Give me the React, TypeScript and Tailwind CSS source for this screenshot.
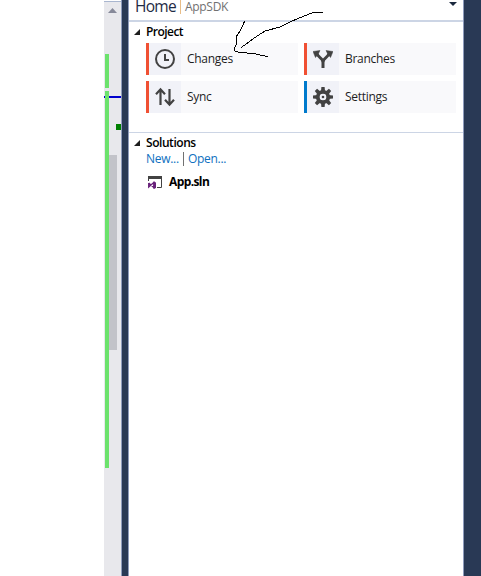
import type { ReactNode } from 'react';

function ClockIcon() {
  return (
    <svg width="20" height="20" viewBox="0 0 20 20" fill="none" stroke="#424242" strokeWidth="2">
      <circle cx="10" cy="10" r="9" />
      <path d="M10 5v6h4" />
    </svg>
  );
}

function SyncIcon() {
  return (
    <svg width="20" height="20" viewBox="0 0 20 20" fill="none" stroke="#424242" strokeWidth="2.2">
      <path d="M5.5 18V2M1 7.2L5.5 2.3L10 7.2M14.5 2v16M10 12.8l4.5 4.9l4.5-4.9" />
    </svg>
  );
}

function BranchIcon() {
  return (
    <svg width="20" height="20" viewBox="0 0 20 20" fill="none">
      <path d="M4 4.500C5 9 10 8.500 10 13.500C10 8.500 15 9 16 4.500M10 12v7" stroke="#424242" strokeWidth="3" />
      <path d="M0 2.500L7 1.500L5.500 4.500L2.500 8.500zM20 2.500L13 1.500L14.500 4.500L17.500 8.500z" fill="#424242" stroke="#424242" strokeWidth=".5" />
    </svg>
  );
}

function GearIcon() {
  const angles = [0, 45, 90, 135, 180, 225, 270, 315];
  return (
    <svg width="20" height="20" viewBox="0 0 20 20" fill="#424242">
      {angles.map((a) => (
        <path key={a} d="M8.400 0h3.200l.5 5H7.900z" transform={`rotate(${a} 10 10)`} />
      ))}
      <circle cx="10" cy="10" r="5.200" fill="none" stroke="#424242" strokeWidth="3.800" />
      <circle cx="10" cy="10" r="3.100" fill="#f1f2f8" />
      <circle cx="10" cy="10" r="1.300" />
    </svg>
  );
}

function SolutionIcon() {
  return (
    <svg width="15" height="13" viewBox="0 0 15 13" fill="none">
      <path d="M.5 5V.5h13v11H9" stroke="#424242" />
      <path d="M0 0h14v3H0z" fill="#424242" />
      <path d="M.7 7v4L5.800 6.500v5L.7 7" stroke="#68217a" strokeWidth="1.300" />
      <path d="M5.500 5.500L8 6.500v5.500l-2.500 1z" fill="#68217a" />
    </svg>
  );
}

function Expander() {
  return (
    <svg className="mr-[6px] shrink-0" width="6" height="6" viewBox="0 0 6 6">
      <path d="M6 0v6H0z" fill="#1e1e1e" />
    </svg>
  );
}

function Tile({ bar, icon, children }: { bar: string; icon: ReactNode; children: ReactNode }) {
  return (
    <button className="flex h-8 w-[152px] items-center bg-[#f9f9fb] text-left">
      <span className={`h-8 w-[3px] ${bar}`} />
      <span className="flex size-8 items-center justify-center bg-[#f1f2f8]">{icon}</span>
      <span className="ml-[6px]">{children}</span>
    </button>
  );
}

function ScrollBar() {
  return (
    <div className="relative w-[17px] shrink-0 bg-[#e8e8ec]">
      <div className="absolute left-0 top-0 h-[2px] w-full border-b border-[#a9b6cf] bg-white" />
      <svg className="absolute left-[4px] top-[8px]" width="9" height="5" viewBox="0 0 9 5">
        <path d="M4.500 0L9 5H0z" fill="#868999" />
      </svg>
      <div className="absolute left-[5px] top-[155px] h-[195px] w-[8px] bg-[#c2c3c9]" />
      <div className="absolute left-0 top-[96px] h-[2px] w-full bg-[#0000cd]" />
      <div className="absolute left-px top-[54px] h-[34px] w-[4px] bg-[#6ce26c]" />
      <div className="absolute left-px top-[91px] h-[377px] w-[4px] bg-[#6ce26c]" />
      <div className="absolute left-[12px] top-[124px] h-[6px] w-[5px] bg-[#008000]" />
    </div>
  );
}

export default function App() {
  return (
    <div className="relative flex h-[576px] w-[481px] overflow-hidden bg-white font-['Open_Sans','Noto_Sans',sans-serif] text-[12px] leading-4 tracking-[-0.3px] text-[#1e1e1e]">
      <div className="w-[104px] shrink-0" />
      <ScrollBar />
      <div className="w-[8px] shrink-0 border-x border-[#8e9bbc] bg-[#293955]" />
      <main className="w-[334px] shrink-0">
        <header className="flex h-[22px] items-start border-b-2 border-[#ccd5e5]">
          <h1 className="ml-[6px] w-[45px] text-[15.500px] leading-[12px] tracking-[-0.700px] text-[#1e2a45]">Home</h1>
          <span className="h-[14px] w-px bg-[#e8bd87]" />
          <span className="ml-[4px] leading-[14px] text-[#717171]">AppSDK</span>
          <svg className="ml-auto mr-[6px] mt-[2px]" width="8" height="4" viewBox="0 0 8 4">
            <path d="M0 0h8L4 4z" fill="#1b293e" />
          </svg>
        </header>
        <section className="h-[111px] border-b border-[#ccd5e5] pl-[5px] pt-[2px]">
          <h2 className="flex items-center font-semibold tracking-[-0.55px] text-black">
            <Expander />Project
          </h2>
          <div className="ml-[12px] mt-[3px] grid w-[310px] grid-cols-2 gap-[6px]">
            <Tile bar="bg-[#f05033]" icon={<ClockIcon />}>Changes</Tile>
            <Tile bar="bg-[#f05033]" icon={<BranchIcon />}>Branches</Tile>
            <Tile bar="bg-[#f05033]" icon={<SyncIcon />}>Sync</Tile>
            <Tile bar="bg-[#007acc]" icon={<GearIcon />}>Settings</Tile>
          </div>
        </section>
        <section className="pl-[5px] pt-[2px]">
          <h2 className="flex items-center font-semibold tracking-[-0.450px] text-black">
            <Expander />Solutions
          </h2>
          <nav className="ml-[12px] flex text-[#0e70c0]">
            <a className="w-[37px]">New...</a>
            <span className="mt-px h-[14px] w-px bg-[#717171]" />
            <a className="ml-[4px]">Open...</a>
          </nav>
          <div className="ml-[14px] mt-[7px] flex items-center text-black">
            <SolutionIcon />
            <span className="ml-[6px] font-bold tracking-[-0.600px]">App.sln</span>
          </div>
        </section>
      </main>
      <div className="flex-1 border-l border-[#8e9bbc] bg-[#293955]" />
      <svg className="absolute left-0 top-0" width="481" height="80" viewBox="0 0 481 80" fill="none" stroke="#000" shapeRendering="crispEdges">
        <path d="M244.500 21.500L240.500 30.500L237 35.500L236 45L234.500 48.500L235 51L240 52.500L253.500 53.500L262 55.500L268 56.500" />
        <path d="M323 12.500H313L303 16.500L292 21L280 27L265 31L255 37.500L247 43.500L241 47.500" />
      </svg>
    </div>
  );
}
